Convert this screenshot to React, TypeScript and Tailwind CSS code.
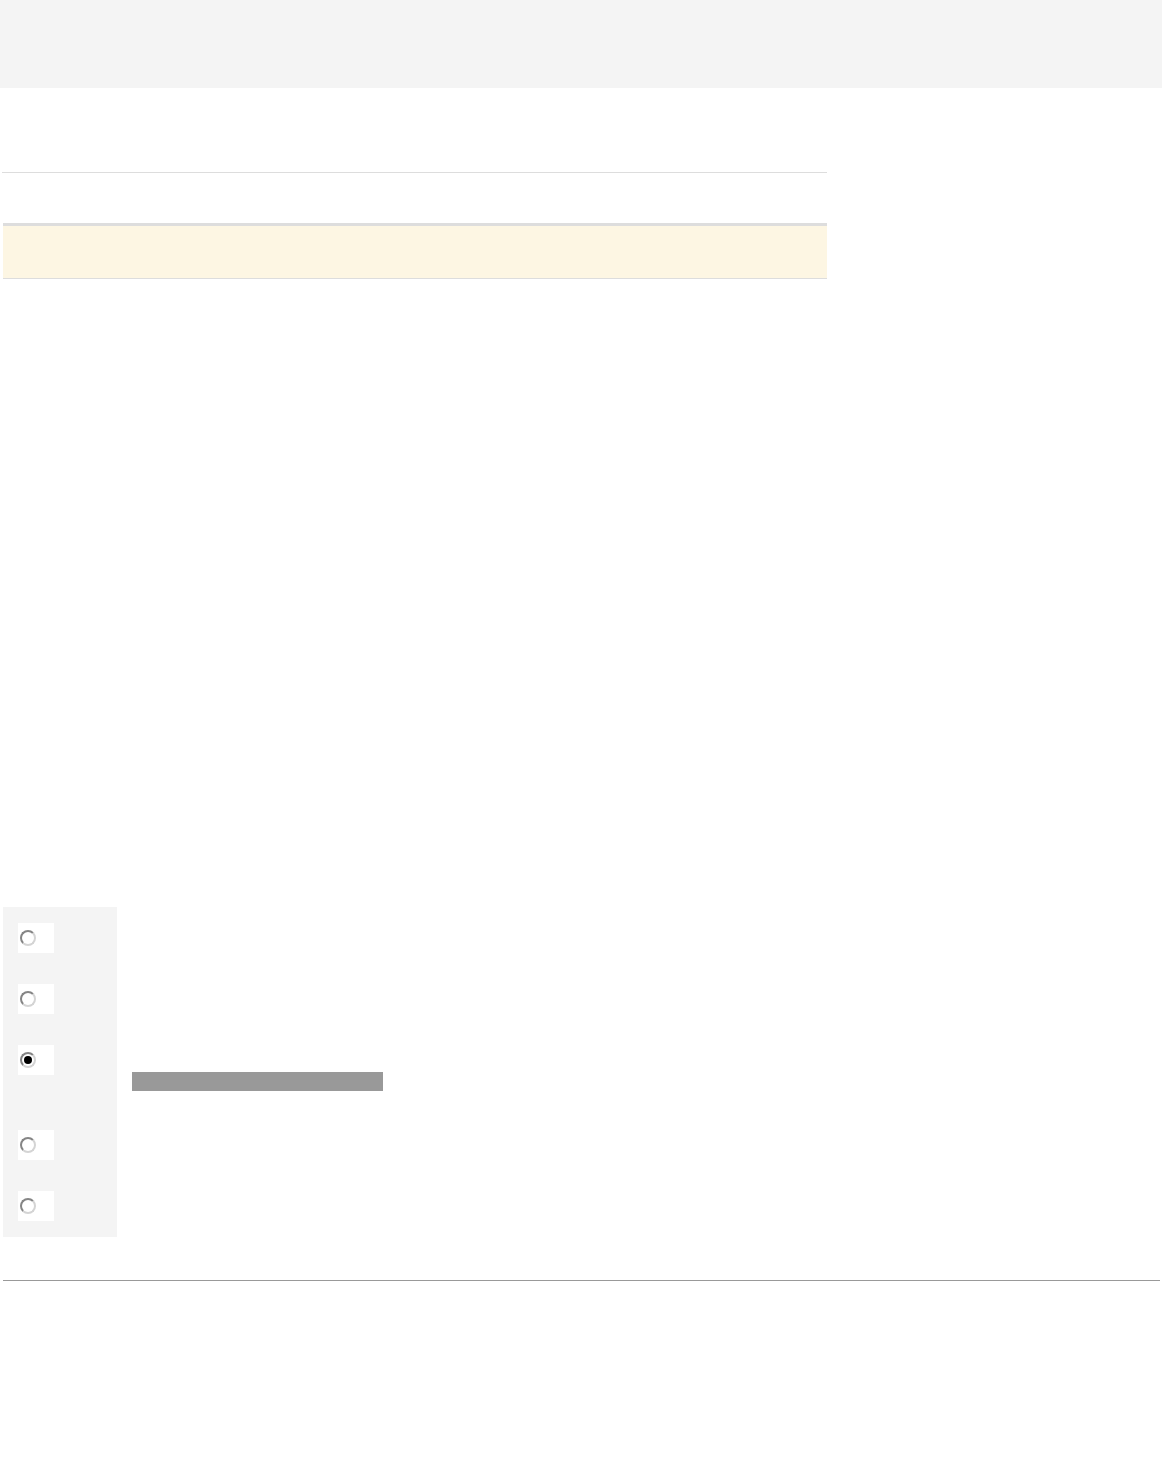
import React from "react";

function Radio({ checked }: { checked?: boolean }) {
  return (
    <div className="w-[36px] h-[30px] bg-white pl-[2px] pt-[7px]">
      <div className="w-[16px] h-[16px] rounded-full border-2 border-t-[#858585] border-l-[#858585] border-r-[#d4d4d4] border-b-[#d4d4d4] bg-white flex items-center justify-center">
        {checked ? <div className="w-[8px] h-[8px] rounded-full bg-black" /> : null}
      </div>
    </div>
  );
}

export default function App() {
  return (
    <div className="w-[1162px] min-h-[1484px] bg-white" style={{ fontFamily: '"Liberation Sans", Arial, sans-serif' }}>
      <div className="h-[88px] bg-[#f4f4f4]" />
      <div className="ml-[2px] mt-[84px] w-[825px] h-px bg-[#dddddd]" />
      <div className="ml-[3px] mt-[50px] w-[824px] h-[56px] border-t-[3px] border-b border-[#dddddd] bg-[#fdf6e3]" />
      <div className="flex mt-[628px]">
        <div className="ml-[3px] w-[114px] h-[330px] bg-[#f4f4f4] pl-[15px] pt-[16px] flex flex-col">
          <Radio />
          <div className="mt-[31px]"><Radio /></div>
          <div className="mt-[31px]"><Radio checked /></div>
          <div className="mt-[55px]"><Radio /></div>
          <div className="mt-[31px]"><Radio /></div>
        </div>
        <div className="ml-[15px] mt-[165px] w-[251px] h-[19px] bg-[#999999]" />
      </div>
      <div className="ml-[3px] mt-[43px] w-[1157px] h-px bg-[#999999]" />
    </div>
  );
}
